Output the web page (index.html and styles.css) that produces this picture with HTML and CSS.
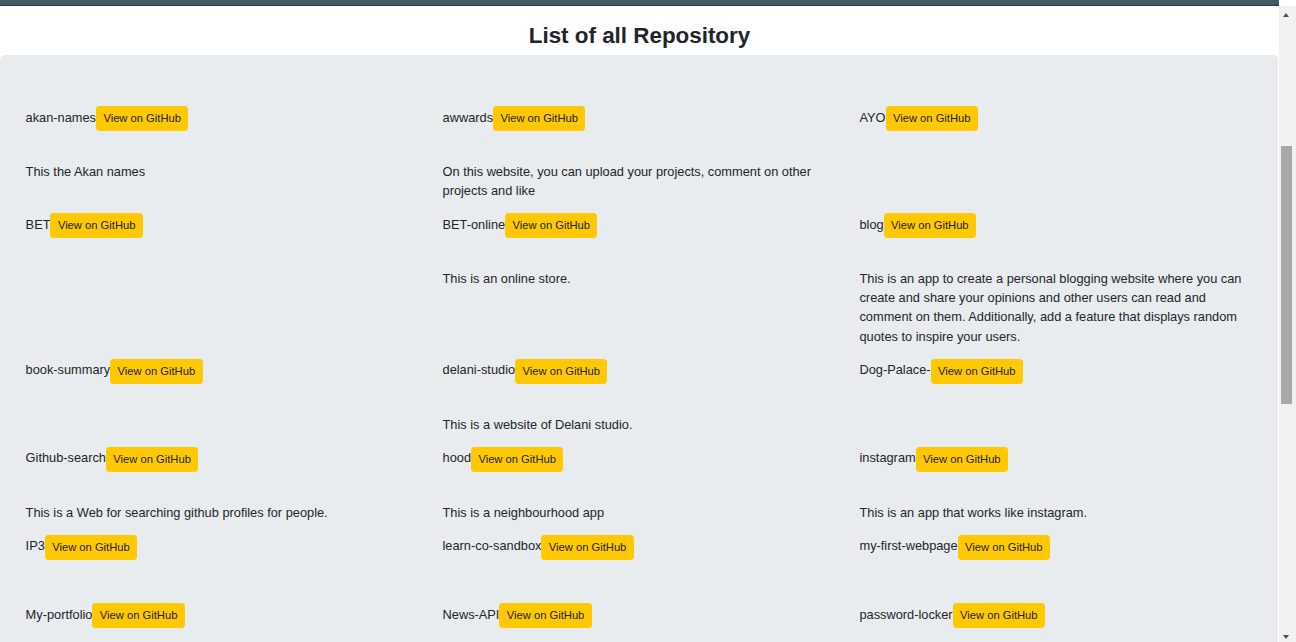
FILE: index.html
```html
<!DOCTYPE html>
<html lang="en">
<head>
<meta charset="utf-8">
<title>Repositories</title>
<link rel="stylesheet" href="styles.css">
</head>
<body>
<div class="page">
<header class="hero">
  <div class="hero-inner">
    <div class="hero-name">GitHub Profile</div>
    <div class="hero-sub">Repositories and projects</div>
  </div>
</header>
<h3 class="page-title">List of all Repository</h3>
<main class="jumbotron">
  <div class="repo-grid">
    <div class="repo"><div class="title"><span class="name">akan-names</span><a class="btn" href="#">View on GitHub</a></div><p class="desc">This the Akan names</p></div>
    <div class="repo"><div class="title"><span class="name">awwards</span><a class="btn" href="#">View on GitHub</a></div><p class="desc">On this website, you can upload your projects, comment on other projects and like</p></div>
    <div class="repo"><div class="title"><span class="name">AYO</span><a class="btn" href="#">View on GitHub</a></div><p class="desc"></p></div>

    <div class="repo"><div class="title"><span class="name">BET</span><a class="btn" href="#">View on GitHub</a></div><p class="desc"></p></div>
    <div class="repo"><div class="title"><span class="name">BET-online</span><a class="btn" href="#">View on GitHub</a></div><p class="desc">This is an online store.</p></div>
    <div class="repo"><div class="title"><span class="name">blog</span><a class="btn" href="#">View on GitHub</a></div><p class="desc">This is an app to create a personal blogging website where you can create and share your opinions and other users can read and comment on them. Additionally, add a feature that displays random quotes to inspire your users.</p></div>

    <div class="repo"><div class="title"><span class="name">book-summary</span><a class="btn" href="#">View on GitHub</a></div><p class="desc"></p></div>
    <div class="repo"><div class="title"><span class="name">delani-studio</span><a class="btn" href="#">View on GitHub</a></div><p class="desc">This is a website of Delani studio.</p></div>
    <div class="repo"><div class="title"><span class="name">Dog-Palace-</span><a class="btn" href="#">View on GitHub</a></div><p class="desc"></p></div>

    <div class="repo"><div class="title"><span class="name">Github-search</span><a class="btn" href="#">View on GitHub</a></div><p class="desc">This is a Web for searching github profiles for people.</p></div>
    <div class="repo"><div class="title"><span class="name">hood</span><a class="btn" href="#">View on GitHub</a></div><p class="desc">This is a neighbourhood app</p></div>
    <div class="repo"><div class="title"><span class="name">instagram</span><a class="btn" href="#">View on GitHub</a></div><p class="desc">This is an app that works like instagram.</p></div>

    <div class="repo"><div class="title"><span class="name">IP3</span><a class="btn" href="#">View on GitHub</a></div><p class="desc"></p></div>
    <div class="repo"><div class="title"><span class="name">learn-co-sandbox</span><a class="btn" href="#">View on GitHub</a></div><p class="desc"></p></div>
    <div class="repo"><div class="title"><span class="name">my-first-webpage</span><a class="btn" href="#">View on GitHub</a></div><p class="desc"></p></div>

    <div class="repo"><div class="title"><span class="name">My-portfolio</span><a class="btn" href="#">View on GitHub</a></div><p class="desc">This is my portfolio website.</p></div>
    <div class="repo"><div class="title"><span class="name">News-API</span><a class="btn" href="#">View on GitHub</a></div><p class="desc">This is an app that lists news sources and articles.</p></div>
    <div class="repo"><div class="title"><span class="name">password-locker</span><a class="btn" href="#">View on GitHub</a></div><p class="desc">This is an app that stores account credentials.</p></div>

    <div class="repo"><div class="title"><span class="name">pitch</span><a class="btn" href="#">View on GitHub</a></div><p class="desc">This is an app to share one minute pitches.</p></div>
    <div class="repo"><div class="title"><span class="name">Quotes</span><a class="btn" href="#">View on GitHub</a></div><p class="desc">This is an app for quotes.</p></div>
    <div class="repo"><div class="title"><span class="name">shopping-list</span><a class="btn" href="#">View on GitHub</a></div><p class="desc"></p></div>

    <div class="repo"><div class="title"><span class="name">taskbook</span><a class="btn" href="#">View on GitHub</a></div><p class="desc">This is a to-do list app.</p></div>
    <div class="repo"><div class="title"><span class="name">tribute-page</span><a class="btn" href="#">View on GitHub</a></div><p class="desc"></p></div>
    <div class="repo"><div class="title"><span class="name">weather-app</span><a class="btn" href="#">View on GitHub</a></div><p class="desc">This is a weather app.</p></div>

    <div class="repo"><div class="title"><span class="name">watchlist</span><a class="btn" href="#">View on GitHub</a></div><p class="desc">This is a movie watchlist app.</p></div>
    <div class="repo"><div class="title"><span class="name">pizza-order</span><a class="btn" href="#">View on GitHub</a></div><p class="desc">This is a pizza ordering website.</p></div>
    <div class="repo"><div class="title"><span class="name">portfolio-v2</span><a class="btn" href="#">View on GitHub</a></div><p class="desc"></p></div>

    <div class="repo"><div class="title"><span class="name">to-do</span><a class="btn" href="#">View on GitHub</a></div><p class="desc">This is a simple to-do app.</p></div>
    <div class="repo"><div class="title"><span class="name">travel-site</span><a class="btn" href="#">View on GitHub</a></div><p class="desc"></p></div>
    <div class="repo"><div class="title"><span class="name">zero-to-hero</span><a class="btn" href="#">View on GitHub</a></div><p class="desc"></p></div>
  </div>
</main>
</div>
<div class="fake-scrollbar" aria-hidden="true">
  <span class="arrow arrow-up"></span>
  <span class="thumb"></span>
  <span class="arrow arrow-down"></span>
</div>
<script src="script.js"></script>
</body>
</html>
```

FILE: styles.css
```css
html, body {
  margin: 0;
  padding: 0;
}
body {
  background: #ffffff;
  color: #212529;
  font-family: "Liberation Sans", Arial, sans-serif;
  font-size: 12.8px;
  line-height: 1.5;
}
.page {
  margin-right: 17px;
}
.hero {
  height: 331px;
  background: #455a64;
  border-bottom: 1px solid #2e3d44;
  color: #ffffff;
  display: flex;
  align-items: center;
  justify-content: center;
}
.hero-inner {
  text-align: center;
}
.hero-name {
  font-size: 28px;
  font-weight: bold;
}
.hero-sub {
  font-size: 14px;
}
.page-title {
  margin: 16.5px 0 5.4px;
  text-align: center;
  font-size: 22.4px;
  line-height: 1.2;
  font-weight: bold;
  color: #212529;
}
.jumbotron {
  display: block;
  background: #e9ecef;
  border-radius: 4.8px;
  padding: 51px 25.6px 51.2px;
  margin: 0 1px 25.6px 0;
}
.repo-grid {
  display: grid;
  grid-template-columns: repeat(3, 1fr);
  column-gap: 24px;
  align-items: start;
}
.repo {
  display: flex;
  flex-direction: column;
}
.title {
  display: flex;
  align-items: center;
  height: 25px;
  color: #212529;
  white-space: nowrap;
}
.name {
  margin-bottom: 2px;
}
.btn {
  display: inline-block;
  background: #ffc800;
  border: 1px solid #ffc800;
  border-radius: 3.2px;
  color: #212529;
  font-size: 11.2px;
  line-height: 1.5;
  padding: 3.2px 6.4px;
  text-decoration: none;
}
.desc {
  margin: 31px 0 12.8px;
  line-height: 19.2px;
  padding-right: 8px;
}
.fake-scrollbar {
  position: fixed;
  top: 6px;
  right: 0;
  bottom: 0;
  width: 17px;
  background: #f1f1f1;
}
.thumb {
  position: absolute;
  left: 2px;
  width: 11px;
  top: 140px;
  height: 258px;
  background: #a8a8a8;
}
.arrow {
  position: absolute;
  left: 4px;
  width: 0;
  height: 0;
  border-left: 3.5px solid transparent;
  border-right: 3.5px solid transparent;
}
.arrow-up {
  top: 7px;
  border-bottom: 4px solid #505050;
}
.arrow-down {
  bottom: 3px;
  border-top: 4px solid #505050;
}
```

FILE: script.js
```js
window.scrollTo(0, 326);
window.addEventListener('load', function () { window.scrollTo(0, 326); });
```
